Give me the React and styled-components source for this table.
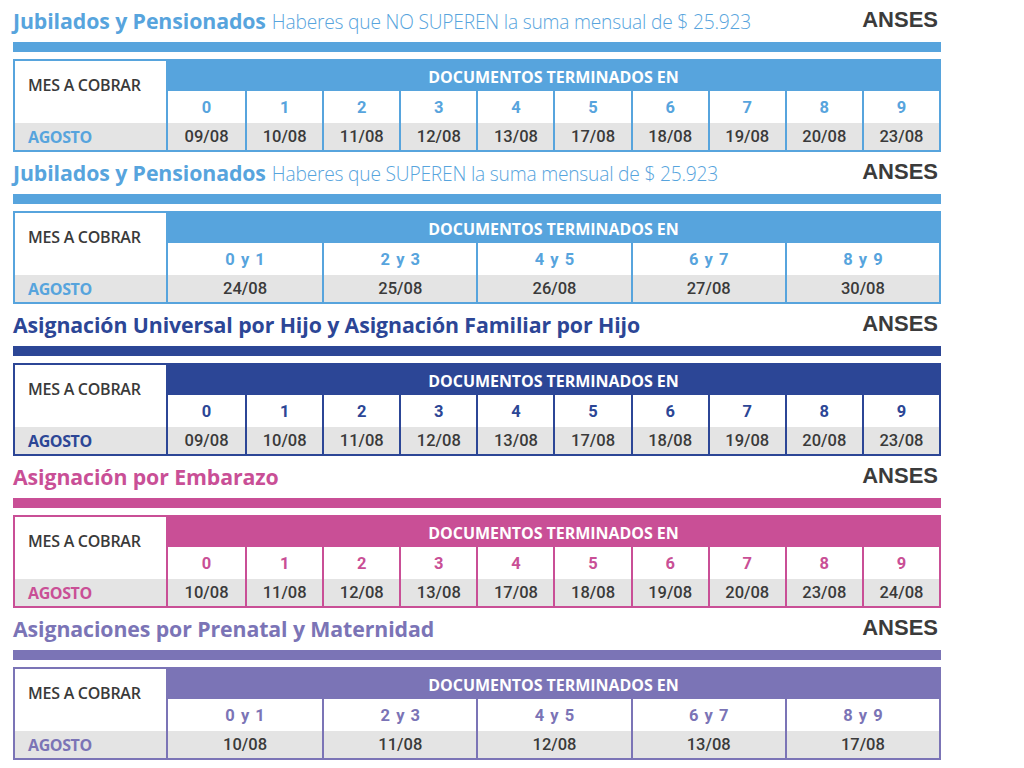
import React from "react";
import styled, { createGlobalStyle } from "styled-components";

const Global = createGlobalStyle`
  html, body { margin: 0; padding: 0; background: #ffffff; }
  body { font-family: "Open Sans", "Liberation Sans", sans-serif; }
`;

const Page = styled.div`
  width: 928px;
  padding: 8px 0 0 13px;
  display: flex;
  flex-direction: column;
`;

const Section = styled.section`
  display: flex;
  flex-direction: column;
  margin-bottom: 8px;
`;

const TitleRow = styled.div`
  height: 24px;
  display: flex;
  align-items: center;
  justify-content: space-between;
`;

const Title = styled.h2`
  margin: 0;
  font-family: "Open Sans", sans-serif;
  font-size: 21.3px;
  font-weight: 700;
  color: ${(p) => p.$color};
  white-space: nowrap;
  letter-spacing: -0.1px;
`;

const Subtitle = styled.span`
  font-weight: 300;
  font-size: 19.2px;
  margin-left: 6px;
  letter-spacing: -0.2px;
`;

const Brand = styled.span`
  font-family: "Liberation Sans", Arial, sans-serif;
  font-weight: 700;
  font-size: 22px;
  color: #3b3b3b;
  margin-right: 3px;
`;

const Bar = styled.div`
  height: 10px;
  margin-top: 10px;
  background: ${(p) => p.$color};
`;

const Table = styled.div`
  margin-top: 7px;
  box-sizing: border-box;
  width: 928px;
  border: 2px solid ${(p) => p.$color};
  display: grid;
  grid-template-columns: 153px repeat(${(p) => p.$cols}, 1fr);
  grid-template-rows: 30px 32px 27px;
`;

const MonthLabel = styled.div`
  grid-row: 1 / 3;
  grid-column: 1;
  box-sizing: border-box;
  border-right: 2px solid ${(p) => p.$color};
  background: #fff;
  padding: 14px 0 0 13px;
  font-family: "Open Sans", sans-serif;
  font-weight: 600;
  font-size: 16px;
  line-height: 20px;
  color: #3a3a3a;
  letter-spacing: -0.25px;
`;

const HeaderBand = styled.div`
  grid-row: 1;
  grid-column: 2 / -1;
  background: ${(p) => p.$color};
  color: #fff;
  display: flex;
  align-items: center;
  justify-content: center;
  font-family: "Open Sans", sans-serif;
  font-weight: 700;
  font-size: 16px;
  letter-spacing: -0.05px;
  padding-top: 1px;
`;

const DigitCell = styled.div`
  grid-row: 2;
  box-sizing: border-box;
  border-left: ${(p) => (p.$first ? "none" : `2px solid ${p.$color}`)};
  background: #fff;
  display: flex;
  align-items: center;
  justify-content: center;
  font-family: Roboto, sans-serif;
  font-weight: 700;
  font-size: 16.5px;
  color: ${(p) => p.$color};
  word-spacing: 2px;
  padding-top: 1px;
`;

const MonthCell = styled.div`
  grid-row: 3;
  grid-column: 1;
  box-sizing: border-box;
  border-right: 2px solid ${(p) => p.$color};
  background: #e4e4e4;
  display: flex;
  align-items: center;
  padding-left: 13px;
  font-family: "Open Sans", sans-serif;
  font-weight: 700;
  font-size: 16px;
  color: ${(p) => p.$color};
  letter-spacing: -0.4px;
`;

const DateCell = styled.div`
  grid-row: 3;
  box-sizing: border-box;
  border-left: ${(p) => (p.$first ? "none" : `2px solid ${p.$color}`)};
  background: #e4e4e4;
  display: flex;
  align-items: center;
  justify-content: center;
  font-family: Roboto, sans-serif;
  font-weight: 500;
  font-size: 16.5px;
  color: #3a3a3a;
`;

const LIGHT = "#57a4dd";
const DARK = "#2c4696";
const PINK = "#c94f96";
const PURPLE = "#7b74b6";

const ten = ["0", "1", "2", "3", "4", "5", "6", "7", "8", "9"];
const five = ["0 y 1", "2 y 3", "4 y 5", "6 y 7", "8 y 9"];

const sections = [
  {
    color: LIGHT,
    title: "Jubilados y Pensionados",
    sub: "Haberes que NO SUPEREN la suma mensual de $ 25.923",
    keys: ten,
    dates: ["09/08", "10/08", "11/08", "12/08", "13/08", "17/08", "18/08", "19/08", "20/08", "23/08"],
  },
  {
    color: LIGHT,
    title: "Jubilados y Pensionados",
    sub: "Haberes que SUPEREN la suma mensual de $ 25.923",
    keys: five,
    dates: ["24/08", "25/08", "26/08", "27/08", "30/08"],
  },
  {
    color: DARK,
    title: "Asignación Universal por Hijo y Asignación Familiar por Hijo",
    keys: ten,
    dates: ["09/08", "10/08", "11/08", "12/08", "13/08", "17/08", "18/08", "19/08", "20/08", "23/08"],
  },
  {
    color: PINK,
    title: "Asignación por Embarazo",
    keys: ten,
    dates: ["10/08", "11/08", "12/08", "13/08", "17/08", "18/08", "19/08", "20/08", "23/08", "24/08"],
  },
  {
    color: PURPLE,
    title: "Asignaciones por Prenatal y Maternidad",
    keys: five,
    dates: ["10/08", "11/08", "12/08", "13/08", "17/08"],
  },
];

function Schedule({ s }) {
  return (
    <Section>
      <TitleRow>
        <Title $color={s.color}>
          {s.title}
          {s.sub && <Subtitle>{s.sub}</Subtitle>}
        </Title>
        <Brand>ANSES</Brand>
      </TitleRow>
      <Bar $color={s.color} />
      <Table $color={s.color} $cols={s.keys.length}>
        <MonthLabel $color={s.color}>MES A COBRAR</MonthLabel>
        <HeaderBand $color={s.color}>DOCUMENTOS TERMINADOS EN</HeaderBand>
        {s.keys.map((k, i) => (
          <DigitCell key={k} $color={s.color} $first={i === 0}>
            {k}
          </DigitCell>
        ))}
        <MonthCell $color={s.color}>AGOSTO</MonthCell>
        {s.dates.map((d, i) => (
          <DateCell key={i} $color={s.color} $first={i === 0}>
            {d}
          </DateCell>
        ))}
      </Table>
    </Section>
  );
}

export default function App() {
  return (
    <>
      <Global />
      <Page>
        {sections.map((s, i) => (
          <Schedule key={i} s={s} />
        ))}
      </Page>
    </>
  );
}
